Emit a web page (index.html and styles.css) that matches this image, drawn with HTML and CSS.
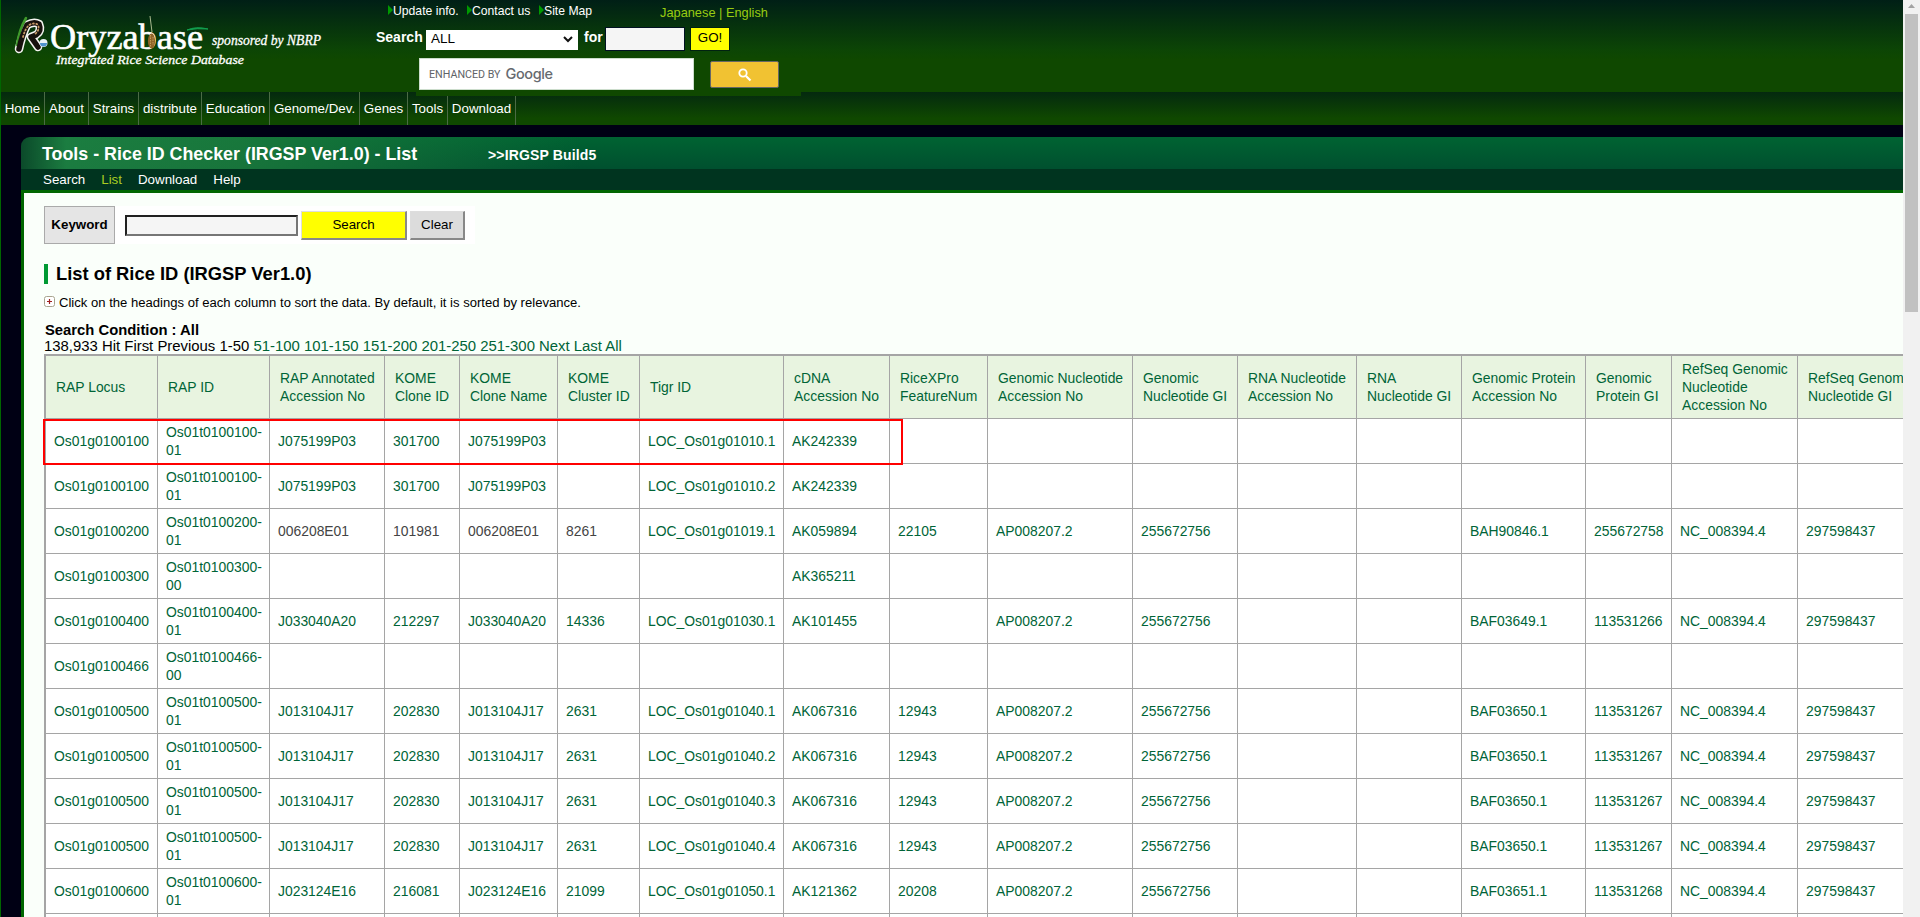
FILE: index.html
```html
<!DOCTYPE html>
<html lang="en">
<head>
<meta charset="utf-8">
<title>Oryzabase - Rice ID Checker</title>
<link rel="stylesheet" href="styles.css">
</head>
<body>
<div class="window">
<div class="page">
  <header class="header">
    <svg class="logo" width="330" height="60" viewBox="0 0 330 60">
      <g fill="none" stroke-linecap="round" stroke-linejoin="round">
        <path d="M10 39Q13 25 18 15Q25 11 30 14Q33 21 27 25L22 27L29 37" stroke="#f4f4f0" stroke-width="8.500"/>
        <path d="M8 35Q10 20 17 8" stroke="#3f9a2c" stroke-width="2.500"/>
        <path d="M10 39Q13 25 18 15Q25 11 30 14Q33 21 27 25L22 27L29 37" stroke="#17110d" stroke-width="5.500"/>
        <path d="M14 27Q16 19 20 15Q26 12 29 15Q31 20 26 24" stroke="#c79a68" stroke-width="1.800" stroke-dasharray="1 2.500"/>
      </g>
      <circle cx="34.500" cy="33" r="4" fill="#e9f1f6"/>
      <path d="M31 33h7a3.500 3.500 0 0 1-7 0z" fill="#4f93cd"/>
      <text class="logo-name" x="41" y="39" textLength="153" lengthAdjust="spacingAndGlyphs">Oryzabase</text>
      <text class="logo-note" x="203" y="35" textLength="109" lengthAdjust="spacingAndGlyphs">sponsored by NBRP</text>
      <text class="logo-sub" x="47" y="54" textLength="188" lengthAdjust="spacingAndGlyphs">Integrated Rice Science Database</text>
      <path d="M141 6q1 8 2 16" fill="none" stroke="#a9b98f" stroke-width="1"/>
      <ellipse cx="142.500" cy="31" rx="3.600" ry="7.500" fill="#8f6428"/>
      <path d="M141.500 25v12M144 27v8" stroke="#c29a57" stroke-width="1" stroke-dasharray="1.500 1"/>
      <path d="M178 20q9-4 21-1-11-1-21 1z" fill="#12a050" stroke="#12a050"/>
    </svg>
    <div class="tools">
      <div class="links">
        <span class="quick"><i class="tri"></i>Update info.</span>
        <span class="quick"><i class="tri"></i>Contact us</span>
        <span class="quick"><i class="tri"></i>Site Map</span>
        <span class="lang">Japanese | English</span>
      </div>
      <div class="site-search">
        <b class="lbl">Search</b>
        <span class="select">ALL<svg width="10" height="7" viewBox="0 0 10 7"><path d="M1 1l4 4 4-4" fill="none" stroke="#111" stroke-width="2"/></svg></span>
        <b class="lbl for">for</b>
        <span class="term"></span>
        <span class="go">GO!</span>
      </div>
      <div class="google">
        <span class="gbox"><span class="enh">ENHANCED BY</span><span class="goog">Google</span></span>
        <span class="gbtn"><svg width="14" height="14" viewBox="0 0 14 14"><circle cx="5" cy="5" r="3.700" fill="none" stroke="#fff" stroke-width="1.800"/><path d="M8 8l4.500 4.500" stroke="#fff" stroke-width="2.200"/></svg></span>
      </div>
    </div>
  </header>
  <nav class="nav">
    <span class="n1">Home</span><span class="n2">About</span><span class="n3">Strains</span><span class="n4">distribute</span><span class="n5">Education</span><span class="n6">Genome/Dev.</span><span class="n7">Genes</span><span class="n8">Tools</span><span class="n9">Download</span>
  </nav>
  <section class="panel">
    <div class="titlebar"><h1>Tools - Rice ID Checker (IRGSP Ver1.0) - List</h1><b>&gt;&gt;IRGSP Build5</b></div>
    <div class="subnav"><span>Search</span><span class="on">List</span><span>Download</span><span>Help</span></div>
    <main class="main">
      <div class="keyword">
        <b class="kw">Keyword</b><span class="kin"></span><span class="kbtn yellow">Search</span><span class="kbtn grey">Clear</span>
      </div>
      <h2><span>List of Rice ID (IRGSP Ver1.0)</span></h2>
      <p class="hint"><svg width="11" height="11" viewBox="0 0 11 11"><rect x=".5" y=".5" width="10" height="10" rx="2" fill="#fff" stroke="#a9a48f"/><path d="M5.500 3v5M3 5.500h5" stroke="#a02020" stroke-width="1.200"/></svg><span>Click on the headings of each column to sort the data. By default, it is sorted by relevance.</span></p>
      <p class="cond">Search Condition : All</p>
      <p class="pager"><span>138,933 Hit First Previous 1-50</span> <span class="a">51-100 101-150 151-200 201-250 251-300 Next Last All</span></p>
      <div class="tablewrap">
        <table class="list">
          <colgroup><col class="c112"><col class="c112"><col class="c115"><col class="c75"><col class="c98"><col class="c82"><col class="c144"><col class="c106"><col class="c98"><col class="c145"><col class="c105"><col class="c119"><col class="c105"><col class="c124"><col class="c86"><col class="c126"><col class="c140"></colgroup>
          <thead><tr><th>RAP Locus<th>RAP ID<th>RAP Annotated<br>Accession No<th>KOME<br>Clone ID<th>KOME<br>Clone Name<th>KOME<br>Cluster ID<th>Tigr ID<th>cDNA<br>Accession No<th>RiceXPro<br>FeatureNum<th>Genomic Nucleotide<br>Accession No<th>Genomic<br>Nucleotide GI<th>RNA Nucleotide<br>Accession No<th>RNA<br>Nucleotide GI<th>Genomic Protein<br>Accession No<th>Genomic<br>Protein GI<th>RefSeq Genomic<br>Nucleotide<br>Accession No<th>RefSeq Genomic<br>Nucleotide GI</tr></thead>
          <tbody>
          <tr><td>Os01g0100100<td>Os01t0100100-01<td>J075199P03<td>301700<td>J075199P03<td><td>LOC_Os01g01010.1<td>AK242339<td><td><td><td><td><td><td><td><td></tr>
          <tr><td>Os01g0100100<td>Os01t0100100-01<td>J075199P03<td>301700<td>J075199P03<td><td>LOC_Os01g01010.2<td>AK242339<td><td><td><td><td><td><td><td><td></tr>
          <tr><td>Os01g0100200<td>Os01t0100200-01<td class="seen">006208E01<td class="seen">101981<td class="seen">006208E01<td class="seen">8261<td>LOC_Os01g01019.1<td>AK059894<td>22105<td>AP008207.2<td>255672756<td><td><td>BAH90846.1<td>255672758<td>NC_008394.4<td>297598437</tr>
          <tr><td>Os01g0100300<td>Os01t0100300-00<td><td><td><td><td><td>AK365211<td><td><td><td><td><td><td><td><td></tr>
          <tr><td>Os01g0100400<td>Os01t0100400-01<td>J033040A20<td>212297<td>J033040A20<td>14336<td>LOC_Os01g01030.1<td>AK101455<td><td>AP008207.2<td>255672756<td><td><td>BAF03649.1<td>113531266<td>NC_008394.4<td>297598437</tr>
          <tr><td>Os01g0100466<td>Os01t0100466-00<td><td><td><td><td><td><td><td><td><td><td><td><td><td><td></tr>
          <tr><td>Os01g0100500<td>Os01t0100500-01<td>J013104J17<td>202830<td>J013104J17<td>2631<td>LOC_Os01g01040.1<td>AK067316<td>12943<td>AP008207.2<td>255672756<td><td><td>BAF03650.1<td>113531267<td>NC_008394.4<td>297598437</tr>
          <tr><td>Os01g0100500<td>Os01t0100500-01<td>J013104J17<td>202830<td>J013104J17<td>2631<td>LOC_Os01g01040.2<td>AK067316<td>12943<td>AP008207.2<td>255672756<td><td><td>BAF03650.1<td>113531267<td>NC_008394.4<td>297598437</tr>
          <tr><td>Os01g0100500<td>Os01t0100500-01<td>J013104J17<td>202830<td>J013104J17<td>2631<td>LOC_Os01g01040.3<td>AK067316<td>12943<td>AP008207.2<td>255672756<td><td><td>BAF03650.1<td>113531267<td>NC_008394.4<td>297598437</tr>
          <tr><td>Os01g0100500<td>Os01t0100500-01<td>J013104J17<td>202830<td>J013104J17<td>2631<td>LOC_Os01g01040.4<td>AK067316<td>12943<td>AP008207.2<td>255672756<td><td><td>BAF03650.1<td>113531267<td>NC_008394.4<td>297598437</tr>
          <tr><td>Os01g0100600<td>Os01t0100600-01<td>J023124E16<td>216081<td>J023124E16<td>21099<td>LOC_Os01g01050.1<td>AK121362<td>20208<td>AP008207.2<td>255672756<td><td><td>BAF03651.1<td>113531268<td>NC_008394.4<td>297598437</tr>
          <tr><td><td><td><td><td><td><td><td><td><td><td><td><td><td><td><td><td></tr>
          </tbody>
        </table>
        <div class="mark"></div>
      </div>
    </main>
  </section>
</div>
<div class="scroll"><svg width="17" height="14" viewBox="0 0 17 14"><path d="M5 8h7L8.500 4z" fill="#a3a3a3"/></svg><div class="thumb"></div></div>
</div>
</body>
</html>
```
FILE: styles.css
```css
* { box-sizing: border-box; }
body { margin: 0; overflow: hidden; font-family: "Liberation Sans", Arial, sans-serif; font-size: 13.33px; color: #000; }
h1, h2, p { margin: 0; }
.window { display: flex; width: 1920px; height: 917px; overflow: hidden; }
.page { width: 1903px; height: 917px; overflow: hidden; background: #000014; border-left: 1px solid #060; display: flex; flex-direction: column; }
.scroll { width: 17px; background: #f1f1f1; display: flex; flex-direction: column; align-items: center; }
.thumb { width: 13px; height: 298px; background: #c1c1c1; }

.header { height: 92px; flex: none; display: flex; color: #fff; background: linear-gradient(#001f16 0, #0c4505 50px, #0f4800 60px, #0f4800 100%); }
.logo { flex: none; margin: 10px 0 0 8px; }
.logo-name, .logo-note, .logo-sub { font-family: "Liberation Serif", serif; fill: #fff; stroke: #fff; stroke-width: .3px; }
.logo-name { font-size: 36px; stroke-width: .6px; }
.logo-note { font-size: 15px; font-style: italic; }
.logo-sub { font-size: 13.5px; font-style: italic; }
.tools { width: 440px; margin-left: 36px; }
.links { height: 27px; display: flex; align-items: flex-start; font-size: 12.2px; line-height: 14px; padding: 4px 0 0 13px; }
.quick { display: flex; width: 79px; white-space: nowrap; }
.quick + .quick { width: 72px; }
.quick + .quick + .quick { width: 121px; }
.tri { border-left: 5px solid #090; border-top: 5px solid transparent; border-bottom: 5px solid transparent; height: 10px; margin-top: 1px; }
.lang { color: #9c1; font-size: 12.8px; line-height: 18px; white-space: nowrap; }
.site-search { display: flex; height: 31px; }
.lbl { font-size: 14px; line-height: 20px; width: 51px; padding-left: 1px; }
.lbl.for { width: 21px; margin-left: 6px; padding-left: 0; }
.select { width: 152px; height: 20px; margin-top: 3px; background: #fff; color: #000; font-size: 13.5px; line-height: 18px; padding: 0 5px 2px; display: flex; justify-content: space-between; align-items: center; }
.term { width: 80px; height: 24px; border: 1px solid #012; background: #f5f5f5; }
.go { width: 40px; height: 24px; margin-left: 5px; border: 1px solid #021; background: #ff0; color: #000; font-size: 13.33px; line-height: 20px; text-align: center; }
.google { position: relative; z-index: 1; display: flex; width: 385px; height: 38px; margin-left: 41px; padding-left: 3px; background: #0f4800; }
.gbox { width: 275px; height: 32px; border: 1px solid #cdc; background: #fff; color: #5f6368; display: flex; align-items: center; padding-left: 9px; }
.enh { font: 10.7px Roboto, sans-serif; }
.goog { font: 500 14.500px Inter, Roboto, sans-serif; letter-spacing: -.4px; margin: -2px 0 0 5px; color: #666a6f; }
.gbtn { width: 69px; height: 27px; margin: 3px 0 0 16px; border: 1px solid #666; border-radius: 2px; background: #f1c232; display: flex; align-items: center; justify-content: center; }

.nav { height: 33px; flex: none; display: flex; background: linear-gradient(#04290f, #0f4800 80%); color: #fff; line-height: 34px; }
.nav span { border-right: 1px solid #4b6b45; text-align: center; white-space: nowrap; }
.n1 { width: 44px; } .n2 { width: 44px; } .n3 { width: 50px; } .n4 { width: 63px; } .n5 { width: 68px; }
.n6 { width: 90px; } .n7 { width: 48px; } .n8 { width: 40px; } .n9 { width: 68px; }

.panel { margin: 12px 0 0 20px; flex: none; }
.titlebar { height: 32px; display: flex; align-items: center; border-radius: 9px 0 0 0; color: #fff; background: linear-gradient(90deg, #0b4a2a 0, rgba(30,128,66,.9) 45px, rgba(30,125,62,.8) 220px, rgba(0,100,50,0) 560px), linear-gradient(#006332, #00502f); }
.titlebar h1 { flex: none; width: 467px; padding-left: 21px; font-size: 17.85px; line-height: 32px; padding-top: 1px; white-space: nowrap; }
.titlebar b { font-size: 14px; letter-spacing: .15px; line-height: 34px; padding-top: 4px; }
.subnav { height: 21px; background: #00341f; color: #fff; display: flex; gap: 16px; padding-left: 22px; line-height: 21px; }
.subnav .on { color: #ac2; }
.main { height: 727px; border-top: 3px solid #060; border-left: 3px solid #060; background: #fafffa; padding: 13px 0 0 20px; overflow: hidden; }
.keyword { display: flex; align-items: center; width: 431px; height: 38px; background: #fff; }
.kw { width: 71px; height: 38px; border: 1px solid #aaa; background: #e5e5e5; line-height: 35px; text-align: center; }
.kin { width: 173px; height: 21px; margin: 0 3px 0 10px; border: 2px inset #767676; background: #f5f5f5; }
.kbtn { height: 29px; line-height: 26px; border: 1px solid #ddd; border-right: 2px solid #888; border-bottom: 2px solid #888; text-align: center; }
.yellow { width: 106px; background: #ff0; margin-right: 3px; }
.grey { width: 55px; background: #dcdcdc; }
h2 { height: 20px; margin-top: 20px; padding-left: 8px; border-left: 4px solid #093; font-size: 18.35px; line-height: 20px; white-space: nowrap; }
.hint { display: flex; margin-top: 12px; height: 20px; gap: 4px; font-size: 13.08px; line-height: 14px; white-space: nowrap; }
.cond { margin-top: 6px; height: 16px; padding-left: 1px; font-size: 14.8px; line-height: 16px; font-weight: bold; white-space: nowrap; }
.pager { height: 16px; font-size: 14.9px; line-height: 16px; white-space: nowrap; }
.a { color: #006437; }
.tablewrap { position: relative; width: 1859px; }
.list { table-layout: fixed; width: 1794px; border-collapse: separate; border-spacing: 0; border-top: 2px solid #a5a5a5; border-left: 2px solid #a5a5a5; font-size: 13.9px; line-height: 18px; color: #006437; }
.list th, .list td { border: solid #a5a5a5; border-width: 0 1px 1px 0; text-align: left; vertical-align: middle; font-weight: normal; }
.list th { height: 63px; padding: 4px 0 4px 10px; background: #e8f4e0; white-space: nowrap; }
.list td { height: 45px; padding: 4px 0 4px 8px; background: #fff; }
.list .seen { color: #444; }
.c75 { width: 75px; } .c82 { width: 82px; } .c86 { width: 86px; } .c98 { width: 98px; } .c105 { width: 105px; }
.c106 { width: 106px; } .c112 { width: 112px; } .c115 { width: 115px; } .c119 { width: 119px; } .c124 { width: 124px; }
.c126 { width: 126px; } .c140 { width: 140px; } .c144 { width: 144px; } .c145 { width: 145px; }
.mark { position: absolute; left: -1px; top: 65px; width: 860px; height: 46px; border: 2px solid #f00; }
```
